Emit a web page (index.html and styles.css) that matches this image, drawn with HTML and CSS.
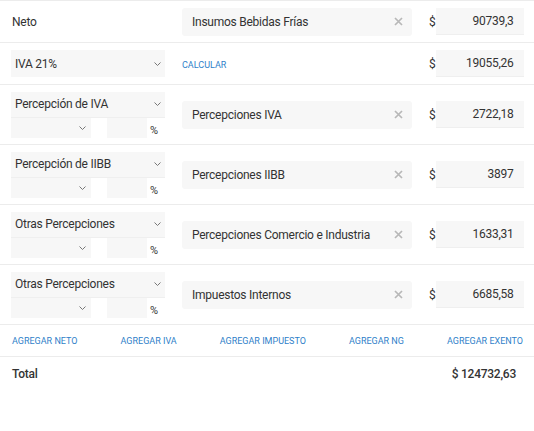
FILE: index.html
```html
<!DOCTYPE html>
<html lang="es">
<head>
  <meta charset="UTF-8" />
  <title>Impuestos</title>
  <link rel="stylesheet" href="styles.css">
</head>
<body>
  <div class="tabla">

    <div class="fila">
      <div class="col-tipo"><span class="etiqueta">Neto</span></div>
      <div class="campo">
        <span>Insumos Bebidas Frías</span>
        <svg class="cerrar" width="9" height="9" viewBox="0 0 9 9"><path d="M1 1L8 8M8 1L1 8" /></svg>
      </div>
      <div class="col-monto"><span class="signo">$</span><div class="monto">90739,3</div></div>
    </div>

    <div class="fila">
      <div class="col-tipo">
        <div class="selector">
          <span>IVA 21%</span>
          <svg class="flecha" width="7" height="4" viewBox="0 0 7 4"><path d="M0.5 0.5L3.5 3.5L6.5 0.5" /></svg>
        </div>
      </div>
      <div class="col-medio"><a class="link" href="#">Calcular</a></div>
      <div class="col-monto"><span class="signo">$</span><div class="monto">19055,26</div></div>
    </div>

    <div class="fila fila-alta">
      <div class="col-tipo">
        <div class="selector selector-alto">
          <span>Percepción de IVA</span>
          <svg class="flecha" width="7" height="4" viewBox="0 0 7 4"><path d="M0.5 0.5L3.5 3.5L6.5 0.5" /></svg>
        </div>
        <div class="sub">
          <div class="selector-chico">
            <svg class="flecha" width="7" height="4" viewBox="0 0 7 4"><path d="M0.5 0.5L3.5 3.5L6.5 0.5" /></svg>
          </div>
          <div class="porcentaje"></div>
          <span class="pct">%</span>
        </div>
      </div>
      <div class="campo">
        <span>Percepciones IVA</span>
        <svg class="cerrar" width="9" height="9" viewBox="0 0 9 9"><path d="M1 1L8 8M8 1L1 8" /></svg>
      </div>
      <div class="col-monto"><span class="signo">$</span><div class="monto">2722,18</div></div>
    </div>

    <div class="fila fila-alta">
      <div class="col-tipo">
        <div class="selector selector-alto">
          <span>Percepción de IIBB</span>
          <svg class="flecha" width="7" height="4" viewBox="0 0 7 4"><path d="M0.5 0.5L3.5 3.5L6.5 0.5" /></svg>
        </div>
        <div class="sub">
          <div class="selector-chico">
            <svg class="flecha" width="7" height="4" viewBox="0 0 7 4"><path d="M0.5 0.5L3.5 3.5L6.5 0.5" /></svg>
          </div>
          <div class="porcentaje"></div>
          <span class="pct">%</span>
        </div>
      </div>
      <div class="campo">
        <span>Percepciones IIBB</span>
        <svg class="cerrar" width="9" height="9" viewBox="0 0 9 9"><path d="M1 1L8 8M8 1L1 8" /></svg>
      </div>
      <div class="col-monto"><span class="signo">$</span><div class="monto">3897</div></div>
    </div>

    <div class="fila fila-alta">
      <div class="col-tipo">
        <div class="selector selector-alto">
          <span>Otras Percepciones</span>
          <svg class="flecha" width="7" height="4" viewBox="0 0 7 4"><path d="M0.5 0.5L3.5 3.5L6.5 0.5" /></svg>
        </div>
        <div class="sub">
          <div class="selector-chico">
            <svg class="flecha" width="7" height="4" viewBox="0 0 7 4"><path d="M0.5 0.5L3.5 3.5L6.5 0.5" /></svg>
          </div>
          <div class="porcentaje"></div>
          <span class="pct">%</span>
        </div>
      </div>
      <div class="campo">
        <span>Percepciones Comercio e Industria</span>
        <svg class="cerrar" width="9" height="9" viewBox="0 0 9 9"><path d="M1 1L8 8M8 1L1 8" /></svg>
      </div>
      <div class="col-monto"><span class="signo">$</span><div class="monto">1633,31</div></div>
    </div>

    <div class="fila fila-alta">
      <div class="col-tipo">
        <div class="selector selector-alto">
          <span>Otras Percepciones</span>
          <svg class="flecha" width="7" height="4" viewBox="0 0 7 4"><path d="M0.5 0.5L3.5 3.5L6.5 0.5" /></svg>
        </div>
        <div class="sub">
          <div class="selector-chico">
            <svg class="flecha" width="7" height="4" viewBox="0 0 7 4"><path d="M0.5 0.5L3.5 3.5L6.5 0.5" /></svg>
          </div>
          <div class="porcentaje"></div>
          <span class="pct">%</span>
        </div>
      </div>
      <div class="campo">
        <span>Impuestos Internos</span>
        <svg class="cerrar" width="9" height="9" viewBox="0 0 9 9"><path d="M1 1L8 8M8 1L1 8" /></svg>
      </div>
      <div class="col-monto"><span class="signo">$</span><div class="monto">6685,58</div></div>
    </div>

    <div class="acciones">
      <a class="link" href="#">Agregar neto</a>
      <a class="link" href="#">Agregar IVA</a>
      <a class="link" href="#">Agregar impuesto</a>
      <a class="link" href="#">Agregar NG</a>
      <a class="link" href="#">Agregar exento</a>
    </div>

    <div class="total">
      <span>Total</span>
      <span>$ 124732,63</span>
    </div>

  </div>
</body>
</html>
```

FILE: styles.css
```css
body {
  margin: 0;
  background: #fff;
  font-family: Roboto, "Liberation Sans", sans-serif;
  font-size: 12px;
  letter-spacing: -0.25px;
  color: #333;
}

.tabla {
  border-top: 1px solid #ececec;
}

.fila {
  display: grid;
  grid-template-columns: 154px 230px 1fr;
  column-gap: 17px;
  align-items: center;
  box-sizing: border-box;
  height: 42px;
  padding: 0 11px;
  border-bottom: 1px solid #ececec;
}

.fila-alta {
  height: 60px;
}

.etiqueta {
  padding-left: 1px;
}

.campo {
  display: flex;
  align-items: center;
  justify-content: space-between;
  height: 28px;
  padding: 0 9px 0 10px;
  background: #f7f7f7;
  border-radius: 3px;
}

.cerrar path {
  stroke: #b8b8b8;
  stroke-width: 1.7;
  fill: none;
}

.col-monto {
  display: flex;
  align-items: center;
  justify-content: flex-end;
}

.monto {
  width: 88px;
  height: 27px;
  line-height: 27px;
  box-sizing: border-box;
  padding-right: 10px;
  text-align: right;
  background: #f7f7f7;
  border-bottom: 1px solid #efefef;
}

.selector {
  display: flex;
  align-items: center;
  justify-content: space-between;
  height: 27px;
  padding: 0 4px;
  background: #f7f7f7;
}

.selector-alto {
  height: 26px;
  border-bottom: 1px solid #efefef;
  box-sizing: border-box;
}

.flecha path {
  stroke: #777;
  stroke-width: 1;
  fill: none;
}

.sub {
  display: flex;
  align-items: flex-end;
  height: 20px;
}

.selector-chico {
  width: 80px;
  height: 20px;
  box-sizing: border-box;
  display: flex;
  align-items: center;
  justify-content: flex-end;
  padding-right: 5px;
  background: #f7f7f7;
}

.porcentaje {
  width: 40px;
  height: 20px;
  margin-left: 16px;
  background: #f7f7f7;
}

.pct {
  margin-left: 3px;
  font-size: 11px;
  line-height: 14px;
}

.link {
  color: #2f7fc9;
  font-size: 9px;
  letter-spacing: 0;
  text-transform: uppercase;
  text-decoration: none;
}

.acciones {
  display: flex;
  justify-content: space-between;
  align-items: center;
  box-sizing: border-box;
  height: 32px;
  padding: 0 11px 0 12px;
  border-bottom: 1px solid #ececec;
}

.total {
  display: flex;
  justify-content: space-between;
  align-items: center;
  height: 33px;
  padding: 0 18px 0 12px;
  font-weight: 500;
}
```
